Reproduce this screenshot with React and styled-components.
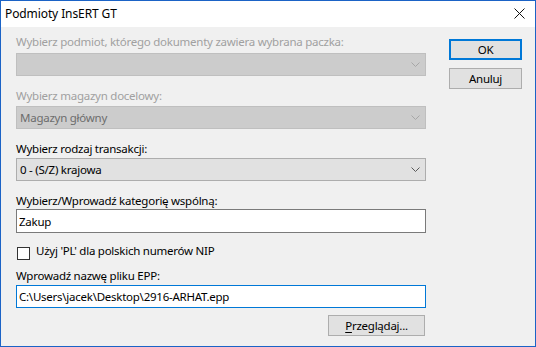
import styled, { createGlobalStyle } from 'styled-components';

const GlobalStyle = createGlobalStyle`
    html, body {
        margin: 0;
        padding: 0;
        background: #ffffff;
    }
    * {
        box-sizing: border-box;
    }
`;

const FONT = `"Noto Sans", "Open Sans", Arial, sans-serif`;

function Chevron({ disabled }) {
    return (
        <svg width="9" height="5" viewBox="0 0 9 5">
            <path d="M0.5 0.5 L4.5 4.5 L8.5 0.5" fill="none" stroke={disabled ? '#a6a6a6' : '#5a5a5a'} strokeWidth="1" />
        </svg>
    );
}

function CloseIcon() {
    return (
        <svg width="11" height="11" viewBox="0 0 11 11">
            <path d="M0.5 0.5 L10.5 10.5 M10.5 0.5 L0.5 10.5" stroke="#111" strokeWidth="1" />
        </svg>
    );
}

export default function App() {
    return (
        <>
            <GlobalStyle />
            <Window>
                <TitleBar>
                    <Title>Podmioty InsERT GT</Title>
                    <CloseButton><CloseIcon /></CloseButton>
                </TitleBar>
                <Client>
                    <LeftColumn>
                        <Label $disabled>Wybierz podmiot, którego dokumenty zawiera wybrana paczka:</Label>
                        <Combo $disabled $top={3}>
                            <ComboText $disabled></ComboText>
                            <Chevron disabled />
                        </Combo>

                        <Label $disabled $top={12}>Wybierz magazyn docelowy:</Label>
                        <Combo $disabled $top={2}>
                            <ComboText $disabled>Magazyn główny</ComboText>
                            <Chevron disabled />
                        </Combo>

                        <Label $top={12}>Wybierz rodzaj transakcji:</Label>
                        <Combo $top={1}>
                            <ComboText>0 - (S/Z) krajowa</ComboText>
                            <Chevron />
                        </Combo>

                        <Label $top={12}>Wybierz/Wprowadź kategorię wspólną:</Label>
                        <TextBox $height={24} defaultValue="Zakup" />

                        <CheckRow>
                            <CheckBox />
                            <CheckLabel>Użyj 'PL' dla polskich numerów NIP</CheckLabel>
                        </CheckRow>

                        <Label $top={8}>Wprowadź nazwę pliku EPP:</Label>
                        <TextBox $height={23} $focused $top={1} defaultValue="C:\Users\jacek\Desktop\2916-ARHAT.epp" />

                        <BrowseRow>
                            <Button $width={97}><u>P</u>rzeglądaj...</Button>
                        </BrowseRow>
                    </LeftColumn>
                    <RightColumn>
                        <Button $width={73} $default>OK</Button>
                        <Button $width={73}>Anuluj</Button>
                    </RightColumn>
                </Client>
            </Window>
        </>
    );
}

const Window = styled.div`
    width: 536px;
    height: 347px;
    border: 1px solid #1b63c6;
    display: flex;
    flex-direction: column;
    font-family: ${FONT};
    font-size: 11.5px;
    letter-spacing: -0.25px;
    color: #000000;
    background: #f0f0f0;
`;

const TitleBar = styled.div`
    height: 26px;
    background: #ffffff;
    display: flex;
    align-items: center;
    justify-content: space-between;
    padding: 0 10px 0 4px;
    flex-shrink: 0;
`;

const Title = styled.span`
    font-size: 12px;
    letter-spacing: -0.1px;
    line-height: 16px;
    padding-bottom: 1px;
`;

const CloseButton = styled.div`
    display: flex;
    align-items: center;
    justify-content: center;
    width: 11px;
    height: 11px;
    margin-top: -1px;
`;

const Client = styled.div`
    flex: 1;
    display: flex;
    flex-direction: row;
    padding: 7px 0 0 15px;
    gap: 23px;
`;

const LeftColumn = styled.div`
    width: 410px;
    display: flex;
    flex-direction: column;
`;

const RightColumn = styled.div`
    display: flex;
    flex-direction: column;
    gap: 8px;
    padding-top: 5px;
`;

const Label = styled.div`
    height: 16px;
    line-height: 16px;
    margin-top: ${p => p.$top || 0}px;
    color: ${p => (p.$disabled ? '#a0a0a0' : '#000000')};
    white-space: nowrap;
`;

const Combo = styled.div`
    height: 23px;
    margin-top: ${p => p.$top || 0}px;
    display: flex;
    align-items: center;
    justify-content: space-between;
    padding: 0 5px 0 3px;
    background: ${p => (p.$disabled ? '#cccccc' : '#e1e1e1')};
    border: 1px solid ${p => (p.$disabled ? '#bfbfbf' : '#adadad')};
`;

const ComboText = styled.span`
    line-height: 16px;
    color: ${p => (p.$disabled ? '#6d6d6d' : '#000000')};
`;

const TextBox = styled.input`
    display: block;
    width: 100%;
    height: ${p => p.$height}px;
    margin: ${p => p.$top || 0}px 0 0 0;
    padding: 0 2px;
    font-family: ${FONT};
    font-size: 11.5px;
    letter-spacing: -0.25px;
    color: #000000;
    background: #ffffff;
    border: 1px solid ${p => (p.$focused ? '#0078d7' : '#7a7a7a')};
    outline: none;
`;

const CheckRow = styled.div`
    display: flex;
    align-items: flex-start;
    margin-top: 10px;
    padding-left: 1px;
    gap: 6px;
`;

const CheckBox = styled.div`
    width: 13px;
    height: 13px;
    margin-top: 4px;
    background: #ffffff;
    border: 1px solid #333333;
`;

const CheckLabel = styled.span`
    line-height: 16px;
`;

const BrowseRow = styled.div`
    display: flex;
    justify-content: flex-end;
    margin-top: 7px;
    padding-right: 1px;
`;

const Button = styled.div`
    width: ${p => p.$width}px;
    height: 21px;
    display: flex;
    align-items: center;
    justify-content: center;
    line-height: 16px;
    background: #e1e1e1;
    border: ${p => (p.$default ? '2px solid #0078d7' : '1px solid #adadad')};

    u {
        text-decoration: underline;
        text-underline-offset: 2px;
    }
`;
